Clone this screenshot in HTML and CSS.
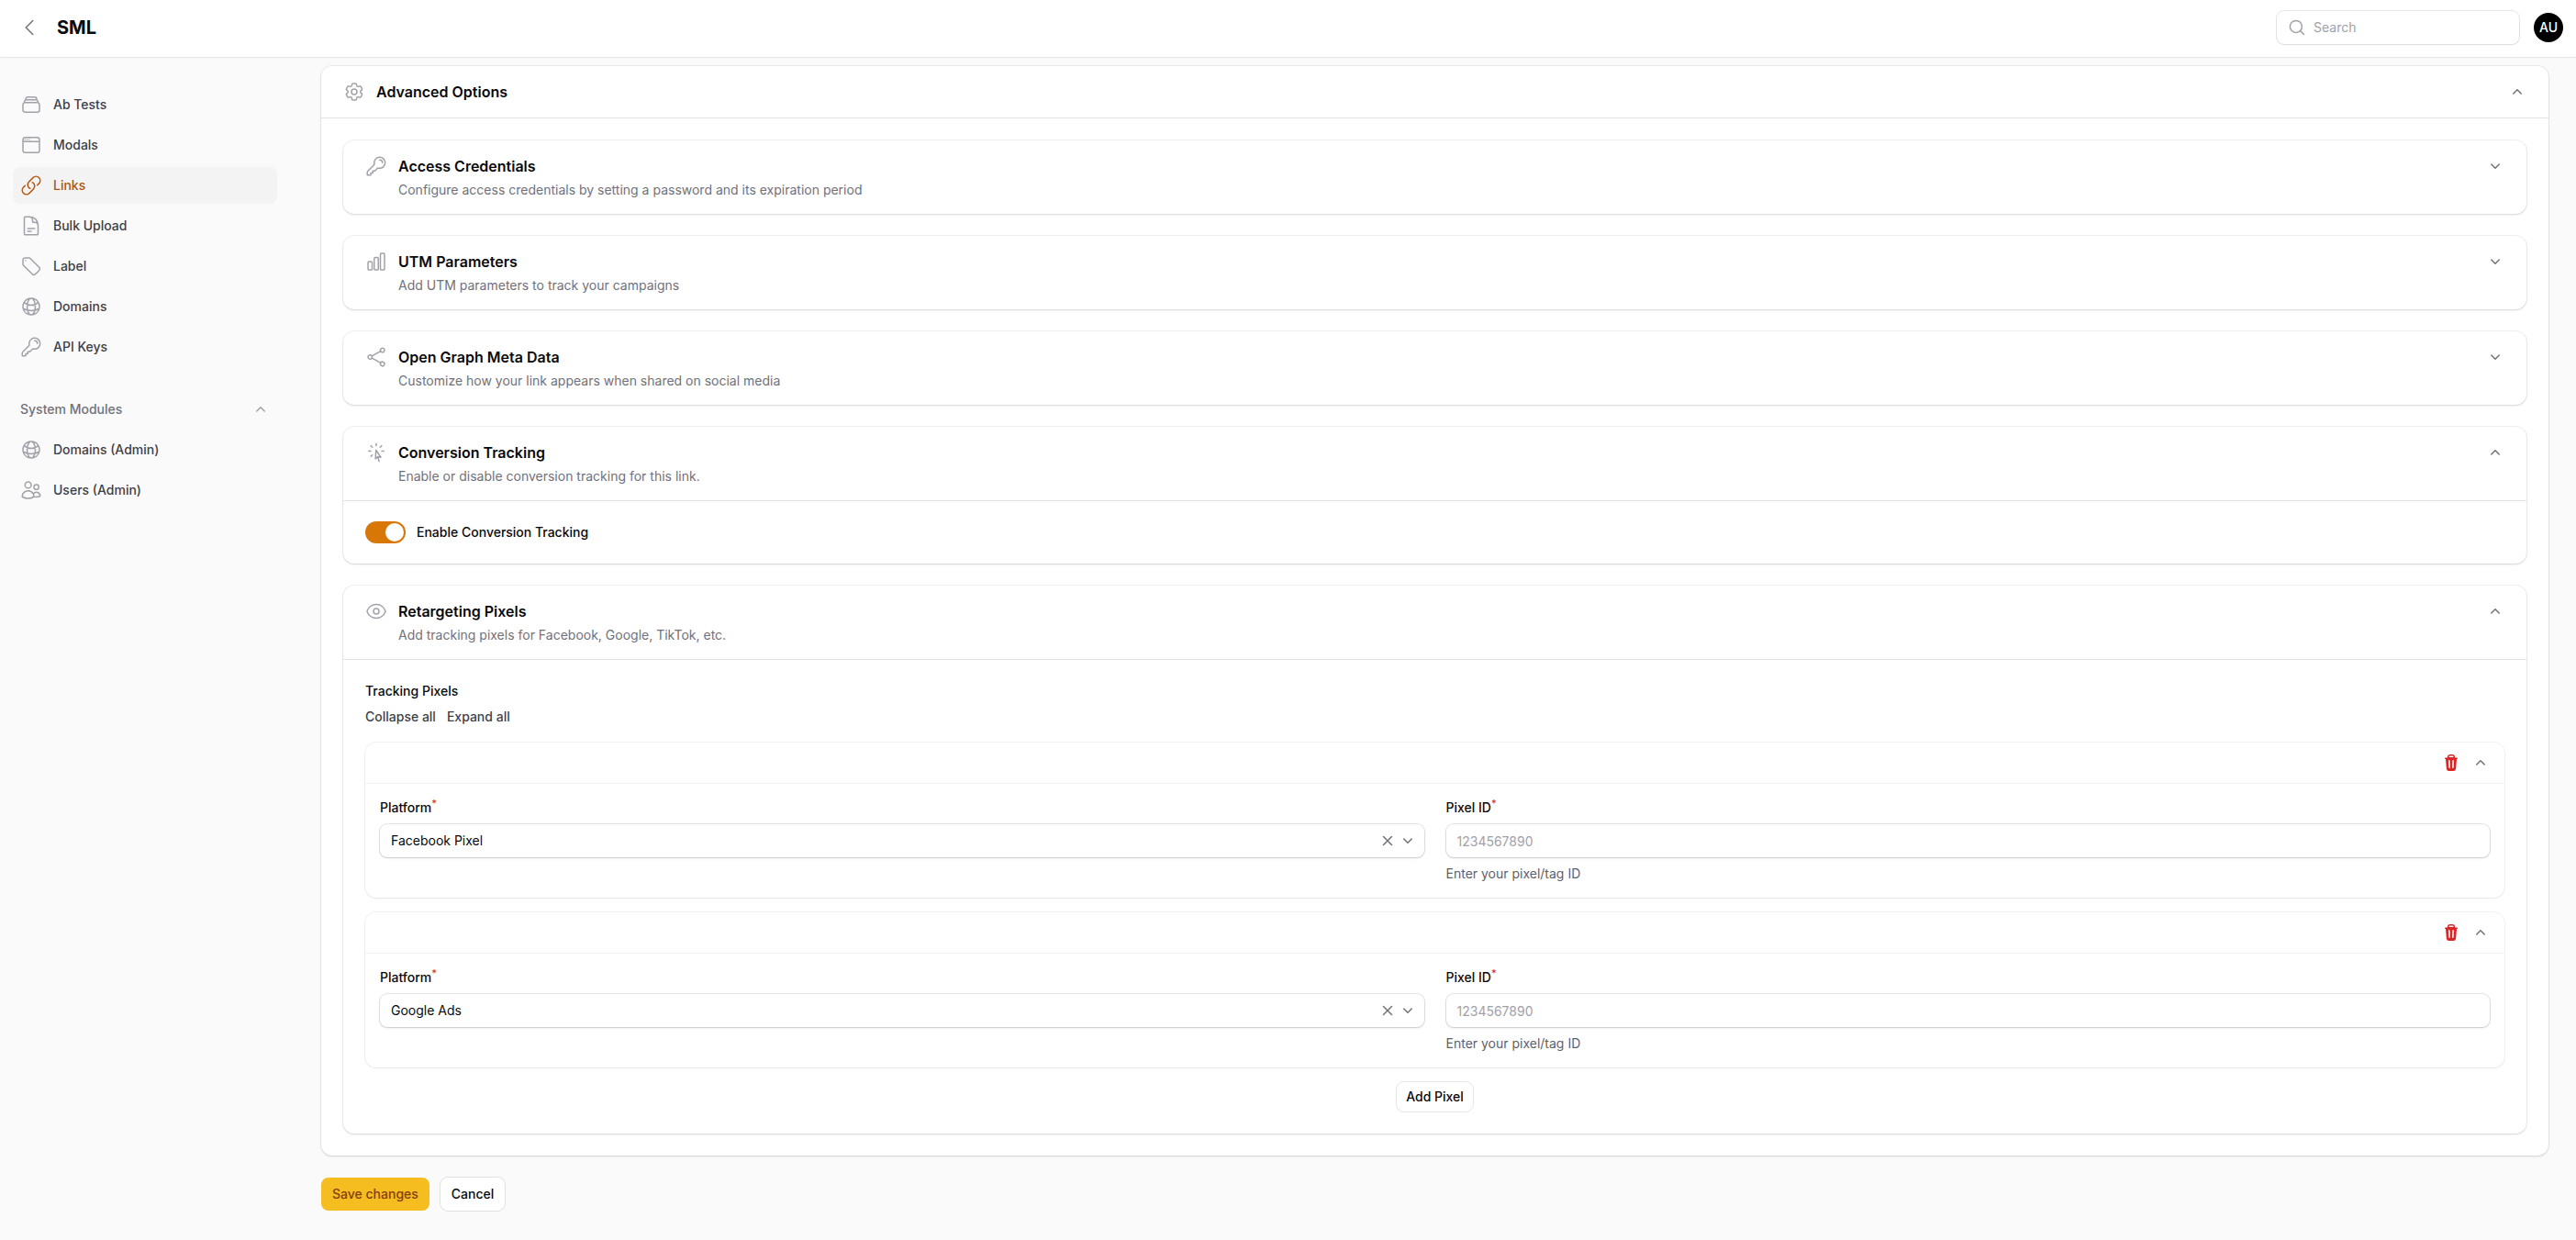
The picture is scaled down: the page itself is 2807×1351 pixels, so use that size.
FILE: index.html
```html
<!DOCTYPE html>
<html lang="en">
<head>
<meta charset="utf-8">
<meta name="viewport" content="width=device-width, initial-scale=1">
<title>SML</title>
<link rel="stylesheet" href="styles.css">
</head>
<body>
<svg class="sprite" aria-hidden="true">
  <symbol id="stack" viewBox="0 0 24 24"><path d="M6 6.878V6a2.25 2.25 0 0 1 2.25-2.25h7.5A2.25 2.25 0 0 1 18 6v.878m-12 0c.235-.083.487-.128.75-.128h10.5c.263 0 .515.045.75.128m-12 0A2.25 2.25 0 0 0 4.5 9v.878m13.5-3A2.25 2.25 0 0 1 19.5 9v.878m0 0a2.246 2.246 0 0 0-.75-.128H5.25c-.263 0-.515.045-.75.128m15 0A2.25 2.25 0 0 1 21 12v6a2.25 2.25 0 0 1-2.25 2.25H5.25A2.25 2.25 0 0 1 3 18v-6c0-.98.626-1.813 1.5-2.122"/></symbol>
  <symbol id="window" viewBox="0 0 24 24"><path d="M3 8.25V18a2.25 2.25 0 0 0 2.25 2.25h13.5A2.25 2.25 0 0 0 21 18V8.25m-18 0V6a2.25 2.25 0 0 1 2.25-2.25h13.5A2.25 2.25 0 0 1 21 6v2.25m-18 0h18M5.25 6h.008v.008H5.25V6ZM7.5 6h.008v.008H7.5V6Zm2.25 0h.008v.008H9.75V6Z"/></symbol>
  <symbol id="link" viewBox="0 0 24 24"><path d="M13.19 8.688a4.5 4.5 0 0 1 1.242 7.244l-4.5 4.5a4.5 4.5 0 0 1-6.364-6.364l1.757-1.757m13.35-.622 1.757-1.757a4.5 4.5 0 0 0-6.364-6.364l-4.5 4.5a4.5 4.5 0 0 0 1.242 7.244"/></symbol>
  <symbol id="document" viewBox="0 0 24 24"><path d="M19.5 14.25v-2.625a3.375 3.375 0 0 0-3.375-3.375h-1.5A1.125 1.125 0 0 1 13.5 7.125v-1.5a3.375 3.375 0 0 0-3.375-3.375H8.25m0 12.75h7.5m-7.5 3H12M10.5 2.25H5.625c-.621 0-1.125.504-1.125 1.125v17.25c0 .621.504 1.125 1.125 1.125h12.75c.621 0 1.125-.504 1.125-1.125V11.25a9 9 0 0 0-9-9Z"/></symbol>
  <symbol id="tag" viewBox="0 0 24 24"><path d="M9.568 3H5.25A2.25 2.25 0 0 0 3 5.25v4.318c0 .597.237 1.17.659 1.591l9.581 9.581c.699.699 1.78.872 2.607.33a18.095 18.095 0 0 0 5.223-5.223c.542-.827.369-1.908-.33-2.607L11.16 3.66A2.25 2.25 0 0 0 9.568 3Z"/><path d="M6 6h.008v.008H6V6Z"/></symbol>
  <symbol id="globe" viewBox="0 0 24 24"><path d="M12 21a9.004 9.004 0 0 0 8.716-6.747M12 21a9.004 9.004 0 0 1-8.716-6.747M12 21c2.485 0 4.5-4.03 4.5-9S14.485 3 12 3m0 18c-2.485 0-4.5-4.03-4.5-9S9.515 3 12 3m0 0a8.997 8.997 0 0 1 7.843 4.582M12 3a8.997 8.997 0 0 0-7.843 4.582m15.686 0A11.953 11.953 0 0 1 12 10.5c-2.998 0-5.74-1.1-7.843-2.918m15.686 0A8.959 8.959 0 0 1 21 12c0 .778-.099 1.533-.284 2.253m0 0A17.919 17.919 0 0 1 12 16.5c-3.162 0-6.133-.815-8.716-2.247m0 0A9.015 9.015 0 0 1 3 12c0-1.605.42-3.113 1.157-4.418"/></symbol>
  <symbol id="key" viewBox="0 0 24 24"><path d="M15.75 5.25a3 3 0 0 1 3 3m3 0a6 6 0 0 1-7.029 5.912c-.563-.097-1.159.026-1.563.43L10.5 17.25H8.25v2.25H6v2.25H2.25v-2.818c0-.597.237-1.17.659-1.591l6.499-6.499c.404-.404.527-1 .43-1.563A6 6 0 1 1 21.75 8.25Z"/></symbol>
  <symbol id="users" viewBox="0 0 24 24"><path d="M12 6.375a3.375 3.375 0 1 1-6.75 0 3.375 3.375 0 0 1 6.75 0ZM20.25 8.625a2.625 2.625 0 1 1-5.25 0 2.625 2.625 0 0 1 5.25 0ZM15 19.128a9.38 9.38 0 0 0 2.625.372c1.478 0 2.876-.343 4.121-.952a4.125 4.125 0 0 0-7.532-2.493M15 19.128c0-1.113-.285-2.16-.786-3.07M15 19.128v.106A12.318 12.318 0 0 1 8.624 21c-2.331 0-4.512-.645-6.374-1.766v-.109a6.375 6.375 0 0 1 11.964-3.07"/></symbol>
  <symbol id="cog" viewBox="0 0 24 24"><path d="M9.594 3.94c.09-.542.56-.94 1.11-.94h2.593c.55 0 1.02.398 1.11.94l.213 1.281c.063.374.313.686.645.87.074.04.147.083.22.127.325.196.72.257 1.075.124l1.217-.456a1.125 1.125 0 0 1 1.37.49l1.296 2.247a1.125 1.125 0 0 1-.26 1.431l-1.003.827c-.293.241-.438.613-.43.992a7.723 7.723 0 0 1 0 .255c-.008.378.137.75.43.991l1.004.827c.424.35.534.955.26 1.43l-1.298 2.247a1.125 1.125 0 0 1-1.369.491l-1.217-.456c-.355-.133-.75-.072-1.076.124a6.47 6.47 0 0 1-.22.128c-.331.183-.581.495-.644.869l-.213 1.281c-.09.543-.56.94-1.11.94h-2.594c-.55 0-1.019-.398-1.11-.94l-.213-1.281c-.062-.374-.312-.686-.644-.87a6.52 6.52 0 0 1-.22-.127c-.325-.196-.72-.257-1.076-.124l-1.217.456a1.125 1.125 0 0 1-1.369-.49l-1.297-2.247a1.125 1.125 0 0 1 .26-1.431l1.004-.827c.292-.24.437-.613.43-.991a6.932 6.932 0 0 1 0-.255c.007-.38-.138-.751-.43-.992l-1.004-.827a1.125 1.125 0 0 1-.26-1.43l1.297-2.247a1.125 1.125 0 0 1 1.37-.491l1.216.456c.356.133.751.072 1.076-.124.072-.044.146-.086.22-.128.332-.183.582-.495.644-.869l.214-1.28Z"/><path d="M15 12a3 3 0 1 1-6 0 3 3 0 0 1 6 0Z"/></symbol>
  <symbol id="chart" viewBox="0 0 24 24"><path d="M3 13.125C3 12.504 3.504 12 4.125 12h2.25c.621 0 1.125.504 1.125 1.125v6.75C7.5 20.496 6.996 21 6.375 21h-2.25A1.125 1.125 0 0 1 3 19.875v-6.75ZM9.75 8.625c0-.621.504-1.125 1.125-1.125h2.25c.621 0 1.125.504 1.125 1.125v11.25c0 .621-.504 1.125-1.125 1.125h-2.25a1.125 1.125 0 0 1-1.125-1.125V8.625ZM16.5 4.125c0-.621.504-1.125 1.125-1.125h2.25C20.496 3 21 3.504 21 4.125v15.75c0 .621-.504 1.125-1.125 1.125h-2.25a1.125 1.125 0 0 1-1.125-1.125V4.125Z"/></symbol>
  <symbol id="share" viewBox="0 0 24 24"><path d="M7.217 10.907a2.25 2.25 0 1 0 0 2.186m0-2.186c.18.324.283.696.283 1.093s-.103.77-.283 1.093m0-2.186 9.566-5.314m-9.566 7.5 9.566 5.314m0 0a2.25 2.25 0 1 0 3.935 2.186 2.25 2.25 0 0 0-3.935-2.186Zm0-12.814a2.25 2.25 0 1 0 3.933-2.185 2.25 2.25 0 0 0-3.933 2.185Z"/></symbol>
  <symbol id="cursor" viewBox="0 0 24 24"><path d="M15.042 21.672 13.684 16.6m0 0-2.51 2.225.569-9.47 5.227 7.917-3.286-.672ZM12 2.25V4.5m5.834.166-1.591 1.591M20.25 10.5H18M7.757 14.743l-1.59 1.59M6 10.5H3.75m4.007-4.243-1.59-1.59"/></symbol>
  <symbol id="eye" viewBox="0 0 24 24"><path d="M2.036 12.322a1.012 1.012 0 0 1 0-.639C3.423 7.51 7.36 4.5 12 4.5c4.638 0 8.573 3.007 9.963 7.178.07.207.07.431 0 .639C20.577 16.49 16.64 19.5 12 19.5c-4.638 0-8.573-3.007-9.963-7.178Z"/><path d="M15 12a3 3 0 1 1-6 0 3 3 0 0 1 6 0Z"/></symbol>
  <symbol id="back" viewBox="0 0 24 24"><path d="M15.75 19.5 8.25 12l7.5-7.5"/></symbol>
  <symbol id="search" viewBox="0 0 20 20"><path d="M13.4 13.4 17.5 17.5M15.4 8.9a6.5 6.5 0 1 1-13 0 6.5 6.5 0 0 1 13 0Z"/></symbol>
  <symbol id="up" viewBox="0 0 20 20"><path d="m5.75 12 4.25-4.25 4.25 4.25"/></symbol>
  <symbol id="down" viewBox="0 0 20 20"><path d="m5.75 8 4.25 4.25L14.25 8"/></symbol>
  <symbol id="close" viewBox="0 0 20 20"><path d="m5.5 5.5 9 9m0-9-9 9"/></symbol>
  <symbol id="trash" viewBox="0 0 20 20"><path fill="currentColor" stroke="none" fill-rule="evenodd" d="M8.75 1A2.75 2.75 0 0 0 6 3.75v.443c-.795.077-1.584.176-2.365.298a.75.75 0 1 0 .23 1.482l.149-.022.841 10.518A2.75 2.75 0 0 0 7.596 19h4.807a2.75 2.75 0 0 0 2.742-2.53l.841-10.52.149.023a.75.75 0 0 0 .23-1.482A41.03 41.03 0 0 0 14 4.193V3.75A2.75 2.75 0 0 0 11.25 1h-2.5ZM10 4c.84 0 1.673.025 2.5.075V3.75c0-.69-.56-1.25-1.25-1.25h-2.5c-.69 0-1.25.56-1.25 1.25v.325C8.327 4.025 9.16 4 10 4ZM8.58 7.72a.75.75 0 0 0-1.5.06l.3 7.5a.75.75 0 1 0 1.5-.06l-.3-7.5Zm4.34.06a.75.75 0 1 0-1.5-.06l-.3 7.5a.75.75 0 1 0 1.5.06l.3-7.5Z"/></symbol>
</svg>

<header class="topbar">
  <button class="icon-btn back" type="button" aria-label="Collapse sidebar"><svg class="icon"><use href="#back"/></svg></button>
  <a class="brand" href="#">SML</a>
  <label class="search">
    <svg class="icon icon-sm"><use href="#search"/></svg>
    <input type="search" placeholder="Search" aria-label="Search">
  </label>
  <button class="avatar" type="button">AU</button>
</header>

<div class="layout">
  <nav class="sidebar">
    <ul class="nav-list">
      <li><a class="nav-item" href="#"><svg class="icon"><use href="#stack"/></svg>Ab Tests</a></li>
      <li><a class="nav-item" href="#"><svg class="icon"><use href="#window"/></svg>Modals</a></li>
      <li><a class="nav-item active" href="#" aria-current="page"><svg class="icon"><use href="#link"/></svg>Links</a></li>
      <li><a class="nav-item" href="#"><svg class="icon"><use href="#document"/></svg>Bulk Upload</a></li>
      <li><a class="nav-item" href="#"><svg class="icon"><use href="#tag"/></svg>Label</a></li>
      <li><a class="nav-item" href="#"><svg class="icon"><use href="#globe"/></svg>Domains</a></li>
      <li><a class="nav-item" href="#"><svg class="icon"><use href="#key"/></svg>API Keys</a></li>
    </ul>
    <div class="nav-group">
      <button class="nav-group-btn" type="button" aria-expanded="true">System Modules<svg class="icon icon-sm"><use href="#up"/></svg></button>
      <ul class="nav-list">
        <li><a class="nav-item" href="#"><svg class="icon"><use href="#globe"/></svg>Domains (Admin)</a></li>
        <li><a class="nav-item" href="#"><svg class="icon"><use href="#users"/></svg>Users (Admin)</a></li>
      </ul>
    </div>
  </nav>

  <main class="main">
    <form class="form">
      <section class="card">
        <header class="card-head">
          <svg class="icon"><use href="#cog"/></svg>
          <div class="card-text"><h2 class="card-title">Advanced Options</h2></div>
          <button class="icon-btn chevron" type="button" aria-label="Collapse Advanced Options"><svg class="icon icon-sm"><use href="#up"/></svg></button>
        </header>
        <div class="card-body stack">

          <section class="card">
            <header class="card-head">
              <svg class="icon"><use href="#key"/></svg>
              <div class="card-text"><h3 class="card-title">Access Credentials</h3><p class="card-desc">Configure access credentials by setting a password and its expiration period</p></div>
              <button class="icon-btn chevron" type="button" aria-label="Expand Access Credentials"><svg class="icon icon-sm"><use href="#down"/></svg></button>
            </header>
          </section>

          <section class="card">
            <header class="card-head">
              <svg class="icon"><use href="#chart"/></svg>
              <div class="card-text"><h3 class="card-title">UTM Parameters</h3><p class="card-desc">Add UTM parameters to track your campaigns</p></div>
              <button class="icon-btn chevron" type="button" aria-label="Expand UTM Parameters"><svg class="icon icon-sm"><use href="#down"/></svg></button>
            </header>
          </section>

          <section class="card">
            <header class="card-head">
              <svg class="icon"><use href="#share"/></svg>
              <div class="card-text"><h3 class="card-title">Open Graph Meta Data</h3><p class="card-desc">Customize how your link appears when shared on social media</p></div>
              <button class="icon-btn chevron" type="button" aria-label="Expand Open Graph Meta Data"><svg class="icon icon-sm"><use href="#down"/></svg></button>
            </header>
          </section>

          <section class="card">
            <header class="card-head">
              <svg class="icon"><use href="#cursor"/></svg>
              <div class="card-text"><h3 class="card-title">Conversion Tracking</h3><p class="card-desc">Enable or disable conversion tracking for this link.</p></div>
              <button class="icon-btn chevron" type="button" aria-label="Collapse Conversion Tracking"><svg class="icon icon-sm"><use href="#up"/></svg></button>
            </header>
            <div class="card-body">
              <label class="toggle-row"><input class="toggle" type="checkbox" role="switch" checked>Enable Conversion Tracking</label>
            </div>
          </section>

          <section class="card">
            <header class="card-head">
              <svg class="icon"><use href="#eye"/></svg>
              <div class="card-text"><h3 class="card-title">Retargeting Pixels</h3><p class="card-desc">Add tracking pixels for Facebook, Google, TikTok, etc.</p></div>
              <button class="icon-btn chevron" type="button" aria-label="Collapse Retargeting Pixels"><svg class="icon icon-sm"><use href="#up"/></svg></button>
            </header>
            <div class="card-body repeater">
              <div class="repeater-head">
                <h4 class="label">Tracking Pixels</h4>
                <div class="repeater-links">
                  <button class="text-btn" type="button">Collapse all</button>
                  <button class="text-btn" type="button">Expand all</button>
                </div>
              </div>

              <div class="item">
                <div class="item-head">
                  <button class="icon-btn danger" type="button" aria-label="Delete"><svg class="icon icon-sm"><use href="#trash"/></svg></button>
                  <button class="icon-btn chevron" type="button" aria-label="Collapse"><svg class="icon icon-sm"><use href="#up"/></svg></button>
                </div>
                <div class="item-body">
                  <div class="field">
                    <label class="label" for="platform-1">Platform<sup>*</sup></label>
                    <div class="select-wrap">
                      <select class="control" id="platform-1"><option>Facebook Pixel</option><option>Google Ads</option></select>
                      <div class="select-icons">
                        <button class="icon-btn" type="button" aria-label="Clear"><svg class="icon icon-sm"><use href="#close"/></svg></button>
                        <svg class="icon icon-sm caret"><use href="#down"/></svg>
                      </div>
                    </div>
                  </div>
                  <div class="field">
                    <label class="label" for="pixel-1">Pixel ID<sup>*</sup></label>
                    <input class="control" id="pixel-1" type="text" placeholder="1234567890">
                    <p class="hint">Enter your pixel/tag ID</p>
                  </div>
                </div>
              </div>

              <div class="item">
                <div class="item-head">
                  <button class="icon-btn danger" type="button" aria-label="Delete"><svg class="icon icon-sm"><use href="#trash"/></svg></button>
                  <button class="icon-btn chevron" type="button" aria-label="Collapse"><svg class="icon icon-sm"><use href="#up"/></svg></button>
                </div>
                <div class="item-body">
                  <div class="field">
                    <label class="label" for="platform-2">Platform<sup>*</sup></label>
                    <div class="select-wrap">
                      <select class="control" id="platform-2"><option>Google Ads</option><option>Facebook Pixel</option></select>
                      <div class="select-icons">
                        <button class="icon-btn" type="button" aria-label="Clear"><svg class="icon icon-sm"><use href="#close"/></svg></button>
                        <svg class="icon icon-sm caret"><use href="#down"/></svg>
                      </div>
                    </div>
                  </div>
                  <div class="field">
                    <label class="label" for="pixel-2">Pixel ID<sup>*</sup></label>
                    <input class="control" id="pixel-2" type="text" placeholder="1234567890">
                    <p class="hint">Enter your pixel/tag ID</p>
                  </div>
                </div>
              </div>

              <button class="btn btn-sm" type="button">Add Pixel</button>
            </div>
          </section>
        </div>
      </section>

      <div class="actions">
        <button class="btn btn-primary" type="submit">Save changes</button>
        <button class="btn" type="button">Cancel</button>
      </div>
    </form>
  </main>
</div>
</body>
</html>
```

FILE: styles.css
```css
:root {
  --gray-50: #fafafa;
  --gray-100: #f3f3f3;
  --gray-400: #a1a1aa;
  --gray-500: #71717a;
  --gray-700: #3f3f46;
  --gray-950: #09090b;
  --ring-soft: 0 0 0 1px rgba(9, 9, 11, .05);
  --ring: 0 0 0 1px rgba(9, 9, 11, .1);
  --shadow-soft: 0 1px 2px rgba(0, 0, 0, .05);
  --shadow: 0 1px 3px rgba(0, 0, 0, .1), 0 1px 2px -1px rgba(0, 0, 0, .1);
}

*, *::before, *::after { box-sizing: border-box; }

body {
  margin: 0;
  background: var(--gray-50);
  color: var(--gray-950);
  font: 400 14px/20px Inter, "Liberation Sans", sans-serif;
  -webkit-font-smoothing: antialiased;
}

h2, h3, h4, p, ul { margin: 0; padding: 0; }
ul { list-style: none; }
a { color: inherit; text-decoration: none; }
button, input, select { font: inherit; color: inherit; margin: 0; }
button { padding: 0; border: 0; background: none; cursor: pointer; }

.sprite { position: absolute; width: 0; height: 0; }

.icon {
  flex: none;
  display: block;
  width: 24px;
  height: 24px;
  fill: none;
  stroke: currentColor;
  stroke-width: 1.5;
  stroke-linecap: round;
  stroke-linejoin: round;
  color: var(--gray-400);
}
.icon-sm { width: 20px; height: 20px; }
.icon-btn .icon { color: inherit; }
.icon-btn { flex: none; color: var(--gray-500); }
.danger { color: #dc2626; }

/* Top bar */
.topbar {
  display: flex;
  align-items: center;
  padding: 12px 14px 14px 20px;
  background: #fff;
  box-shadow: var(--ring-soft), var(--shadow-soft);
}
.brand {
  margin: 0 auto 0 18px;
  font-size: 20px;
  line-height: 20px;
  font-weight: 700;
}
.search {
  display: flex;
  align-items: center;
  gap: 8px;
  width: 264px;
  height: 36px;
  padding: 0 12px;
  border-radius: 8px;
  background: #fff;
  box-shadow: var(--ring), var(--shadow-soft);
}
.search input {
  flex: 1;
  min-width: 0;
  padding: 0;
  border: 0;
  outline: 0;
  background: none;
}
::placeholder { color: var(--gray-400); opacity: 1; }
.avatar {
  width: 32px;
  height: 32px;
  margin-left: 16px;
  border-radius: 50%;
  background: #000;
  color: #fff;
  font-weight: 500;
}

/* Page frame */
.layout { display: flex; }
.sidebar {
  flex: none;
  width: 320px;
  padding: 32px 18px 32px 14px;
}
.main {
  flex: 1;
  min-width: 0;
  padding: 10px 30px 32px;
}

.nav-list { display: grid; gap: 4px; }
.nav-item {
  display: flex;
  align-items: center;
  gap: 12px;
  padding: 8px;
  border-radius: 8px;
  color: var(--gray-700);
  font-weight: 500;
}
.nav-item.active { background: var(--gray-100); }
.nav-item.active, .nav-item.active .icon { color: #b45309; }
.nav-group { display: grid; gap: 4px; margin-top: 28px; }
.nav-group-btn {
  display: flex;
  align-items: center;
  justify-content: space-between;
  padding: 10px 8px;
  color: var(--gray-500);
  font-weight: 500;
}

/* Cards */
.card {
  border-radius: 12px;
  background: #fff;
  box-shadow: var(--ring-soft), var(--shadow);
}
.card-head {
  display: flex;
  align-items: flex-start;
  gap: 12px;
  padding: 16px 24px;
}
.card-head .chevron { padding: 2px 0; }
.card-text { flex: 1; display: grid; gap: 4px; }
.card-title { font-size: 16px; line-height: 24px; font-weight: 600; }
.card-desc { color: var(--gray-500); }
.card-body { padding: 24px; border-top: 1px solid #e4e4e7; }
.stack { display: grid; gap: 24px; }

/* Toggle */
.toggle-row {
  display: flex;
  align-items: center;
  gap: 12px;
  height: 20px;
  font-weight: 500;
}
.toggle {
  appearance: none;
  display: flex;
  width: 44px;
  height: 24px;
  padding: 2px;
  border-radius: 12px;
  background: #d97706;
}
.toggle::before {
  content: "";
  width: 20px;
  height: 20px;
  margin-left: auto;
  border-radius: 50%;
  background: #fff;
}

/* Repeater */
.repeater { display: grid; gap: 16px; }
.repeater-head { display: grid; gap: 8px; padding-bottom: 2px; }
.repeater-links { display: flex; gap: 12px; }
.text-btn { color: var(--gray-700); font-weight: 500; }
.label { font-size: 14px; line-height: 20px; font-weight: 500; }
.label sup {
  color: #dc2626;
  font-size: 11px;
  line-height: 0;
}
.item {
  border-radius: 12px;
  background: #fff;
  box-shadow: var(--ring-soft), var(--shadow-soft);
}
.item-head {
  display: flex;
  justify-content: flex-end;
  gap: 12px;
  padding: 12px 16px;
}
.item-body {
  display: grid;
  grid-template-columns: 1fr 1fr;
  align-items: start;
  gap: 24px;
  padding: 16px;
  border-top: 1px solid var(--gray-100);
}
.field { display: grid; gap: 8px; min-width: 0; }
.control {
  appearance: none;
  width: 100%;
  height: 36px;
  padding: 0 12px;
  border: 0;
  border-radius: 8px;
  outline: 0;
  background: #fff;
  box-shadow: var(--ring), var(--shadow);
}
.select-wrap { position: relative; }
.select-icons {
  position: absolute;
  inset: 0 8px 0 auto;
  display: flex;
  align-items: center;
  gap: 2px;
}
.caret { color: var(--gray-500); pointer-events: none; }
.hint { color: #5f5f68; }

/* Buttons */
.btn {
  padding: 8px 12px;
  border-radius: 8px;
  background: #fff;
  box-shadow: var(--ring);
  font-weight: 500;
}
.btn-sm { justify-self: center; padding: 6px 10px; }
.btn-primary { background: #f6bd20; color: #853f0e; box-shadow: none; }
.actions { display: flex; gap: 12px; margin-top: 24px; }
```
